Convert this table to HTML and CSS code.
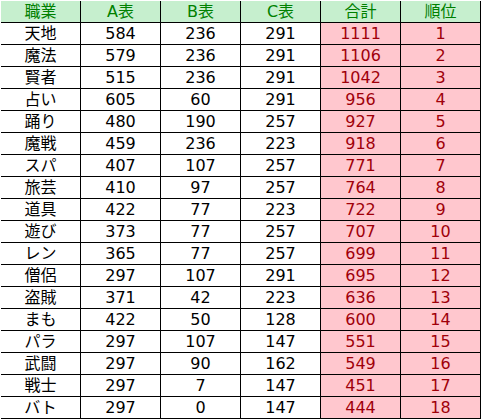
FILE: index.html
```html
<!DOCTYPE html>
<html lang="ja">
<head>
<meta charset="utf-8">
<link rel="stylesheet" href="styles.css">
</head>
<body>
<table class="sheet">
<thead>
<tr><th>職業</th><th>A表</th><th>B表</th><th>C表</th><th>合計</th><th>順位</th></tr>
</thead>
<tbody>
<tr><td>天地</td><td>584</td><td>236</td><td>291</td><td class="hl">1111</td><td class="hl">1</td></tr>
<tr><td>魔法</td><td>579</td><td>236</td><td>291</td><td class="hl">1106</td><td class="hl">2</td></tr>
<tr><td>賢者</td><td>515</td><td>236</td><td>291</td><td class="hl">1042</td><td class="hl">3</td></tr>
<tr><td>占い</td><td>605</td><td>60</td><td>291</td><td class="hl">956</td><td class="hl">4</td></tr>
<tr><td>踊り</td><td>480</td><td>190</td><td>257</td><td class="hl">927</td><td class="hl">5</td></tr>
<tr><td>魔戦</td><td>459</td><td>236</td><td>223</td><td class="hl">918</td><td class="hl">6</td></tr>
<tr><td>スパ</td><td>407</td><td>107</td><td>257</td><td class="hl">771</td><td class="hl">7</td></tr>
<tr><td>旅芸</td><td>410</td><td>97</td><td>257</td><td class="hl">764</td><td class="hl">8</td></tr>
<tr><td>道具</td><td>422</td><td>77</td><td>223</td><td class="hl">722</td><td class="hl">9</td></tr>
<tr><td>遊び</td><td>373</td><td>77</td><td>257</td><td class="hl">707</td><td class="hl">10</td></tr>
<tr><td>レン</td><td>365</td><td>77</td><td>257</td><td class="hl">699</td><td class="hl">11</td></tr>
<tr><td>僧侶</td><td>297</td><td>107</td><td>291</td><td class="hl">695</td><td class="hl">12</td></tr>
<tr><td>盗賊</td><td>371</td><td>42</td><td>223</td><td class="hl">636</td><td class="hl">13</td></tr>
<tr><td>まも</td><td>422</td><td>50</td><td>128</td><td class="hl">600</td><td class="hl">14</td></tr>
<tr><td>パラ</td><td>297</td><td>107</td><td>147</td><td class="hl">551</td><td class="hl">15</td></tr>
<tr><td>武闘</td><td>297</td><td>90</td><td>162</td><td class="hl">549</td><td class="hl">16</td></tr>
<tr><td>戦士</td><td>297</td><td>7</td><td>147</td><td class="hl">451</td><td class="hl">17</td></tr>
<tr><td>バト</td><td>297</td><td>0</td><td>147</td><td class="hl">444</td><td class="hl">18</td></tr>
</tbody>
</table>
</body>
</html>
```
FILE: styles.css
```css
html, body {
  margin: 0;
  padding: 0;
  background: #ffffff;
}
body {
  padding: 1px 0 0 1px;
}
.sheet {
  border-collapse: separate;
  border-spacing: 0;
  font-family: "DejaVu Sans", "Noto Sans CJK JP", sans-serif;
  font-size: 16px;
  table-layout: fixed;
}
.sheet th,
.sheet td {
  width: 79px;
  height: 21px;
  padding: 0;
  border-right: 1px solid #000;
  border-bottom: 1px solid #000;
  text-align: center;
  vertical-align: middle;
  line-height: 21px;
  color: #000;
  white-space: nowrap;
  overflow: hidden;
}
.sheet th {
  font-weight: normal;
  background: #c6efce;
  color: #008000;
}
.sheet td.hl {
  background: #ffc7ce;
  color: #a0000a;
}
```
